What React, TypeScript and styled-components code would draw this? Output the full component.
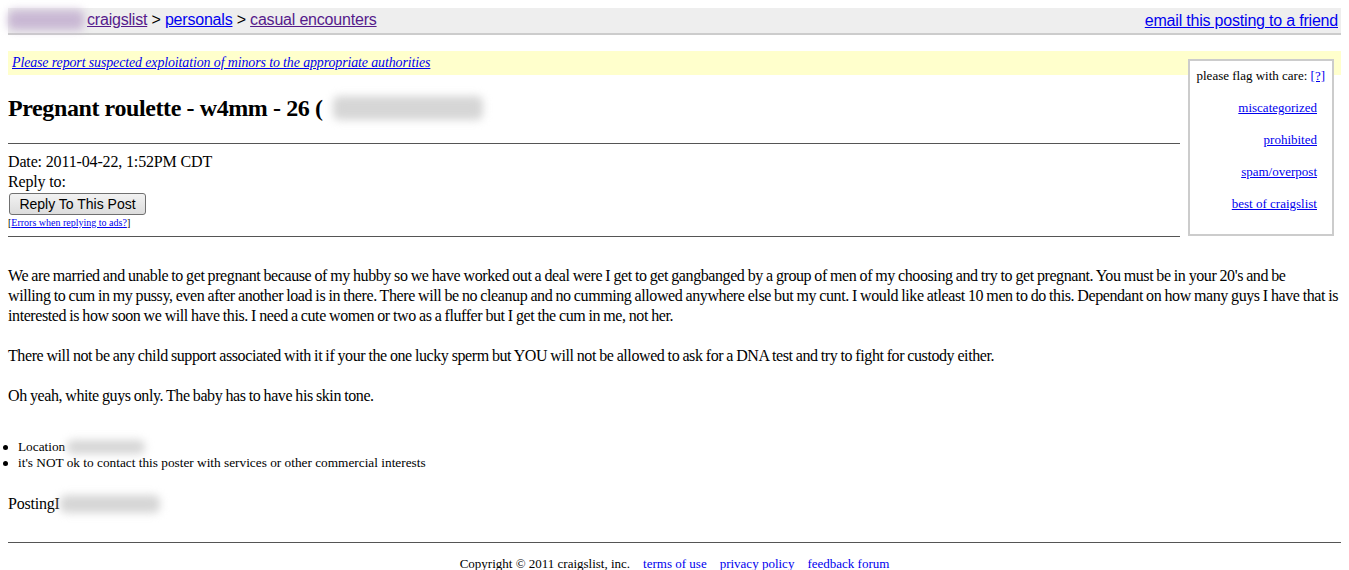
import styled, { createGlobalStyle } from "styled-components";

const GlobalStyle = createGlobalStyle`
  body {
    margin: 0;
    background: #fff;
    color: #000;
    font-family: "Liberation Serif", "Times New Roman", serif;
  }
  a {
    color: #0000ee;
  }
`;

function App() {
  return (
    <Page>
      <GlobalStyle />
      <TopBar>
        <Crumbs>
          <Blur $width={76} $height={20} />
          <a href="#" style={{ color: "#551a8b" }}>craigslist</a> &gt;{" "}
          <a href="#">personals</a> &gt;{" "}
          <a href="#" style={{ color: "#551a8b" }}>casual encounters</a>
        </Crumbs>
        <a href="#">email this posting to a friend</a>
      </TopBar>

      <Notice>
        <a href="#">Please report suspected exploitation of minors to the appropriate authorities</a>
      </Notice>

      <Content>
        <Main>
          <Title>
            Pregnant roulette - w4mm - 26 (
            <Blur $width={150} $height={24} />
          </Title>
          <Rule />
          <Meta>
            Date: 2011-04-22, 1:52PM CDT
            <br />
            Reply to:
          </Meta>
          <ReplyButton>Reply To This Post</ReplyButton>
          <Tiny>
            [<a href="#">Errors when replying to ads?</a>]
          </Tiny>
          <Rule />
        </Main>
        <FlagBox>
          <FlagHead>
            please flag with care: <a href="#">[?]</a>
          </FlagHead>
          <FlagLink href="#">miscategorized</FlagLink>
          <FlagLink href="#">prohibited</FlagLink>
          <FlagLink href="#">spam/overpost</FlagLink>
          <FlagLink href="#">best of craigslist</FlagLink>
        </FlagBox>
      </Content>

      <Body>
        We are married and unable to get pregnant because of my hubby so we have worked out a deal were I get to get gangbanged by a group of men of my choosing and try to get pregnant. You must be in your 20's and be
        <br />
        willing to cum in my pussy, even after another load is in there. There will be no cleanup and no cumming allowed anywhere else but my cunt. I would like atleast 10 men to do this. Dependant on how many guys I have that is
        <br />
        interested is how soon we will have this. I need a cute women or two as a fluffer but I get the cum in me, not her.
        <br />
        <br />
        There will not be any child support associated with it if your the one lucky sperm but YOU will not be allowed to ask for a DNA test and try to fight for custody either.
        <br />
        <br />
        Oh yeah, white guys only. The baby has to have his skin tone.
      </Body>

      <Facts>
        <Fact>
          <Bullet />
          Location
          <Blur $width={78} $height={14} />
        </Fact>
        <Fact>
          <Bullet />
          it's NOT ok to contact this poster with services or other commercial interests
        </Fact>
      </Facts>

      <PostingId>
        PostingI
        <Blur $width={100} $height={18} />
      </PostingId>

      <FooterRule />
      <Footer>
        <span>Copyright © 2011 craigslist, inc.</span>
        <FooterLink href="#">terms of use</FooterLink>
        <FooterLink href="#">privacy policy</FooterLink>
        <FooterLink href="#">feedback forum</FooterLink>
      </Footer>
    </Page>
  );
}

export default App;

const Page = styled.div`
  padding: 8px;
`;

const Blur = styled.span<{ $width: number; $height: number }>`
  display: inline-block;
  vertical-align: middle;
  width: ${(p) => p.$width}px;
  height: ${(p) => p.$height}px;
  background: #d6d6d6;
  border-radius: 6px;
  filter: blur(4px);
`;

const TopBar = styled.div`
  display: flex;
  justify-content: space-between;
  align-items: flex-end;
  height: 22px;
  padding: 0 3px 3px 0;
  background: #eeeeee;
  border-bottom: 2px solid #cccccc;
  font-family: "Liberation Sans", Arial, sans-serif;
  font-size: 16px;
  line-height: 18px;
  letter-spacing: -0.2px;
`;

const Crumbs = styled.div`
  display: flex;
  align-items: center;
  white-space: pre;

  ${Blur} {
    background: #c9b8d4;
    margin-right: 3px;
  }
`;

const Notice = styled.div`
  margin-top: 16px;
  height: 24px;
  padding-left: 4px;
  background: #ffffcc;
  font-size: 13.9px;
  font-style: italic;
  line-height: 24px;
  letter-spacing: -0.1px;
`;

const Content = styled.div`
  display: flex;
  align-items: flex-start;
  gap: 8px;
`;

const Main = styled.div`
  flex: 1;
`;

const Title = styled.h2`
  display: flex;
  align-items: center;
  margin: 19px 0 21px;
  font-size: 24px;
  font-weight: bold;
  line-height: 28px;
  letter-spacing: -0.4px;

  ${Blur} {
    margin-left: 10px;
  }
`;

const Rule = styled.hr`
  margin: 0;
  height: 0;
  border: none;
  border-top: 1px solid #555;
`;

const Meta = styled.div`
  margin-top: 8px;
  font-size: 16px;
  line-height: 20px;
  letter-spacing: -0.15px;
`;

const ReplyButton = styled.button`
  display: block;
  margin: 1px 0 0 1px;
  width: 137px;
  height: 22px;
  padding: 0;
  font-family: "Liberation Sans", Arial, sans-serif;
  font-size: 14px;
  color: #000;
  background: linear-gradient(#f2f2f2, #dcdcdc);
  border: 1px solid #707070;
  border-radius: 3px;
`;

const Tiny = styled.div`
  margin: 2px 0 7px;
  font-size: 10px;
  line-height: 12px;
`;

const FlagBox = styled.div`
  display: flex;
  flex-direction: column;
  align-items: flex-end;
  gap: 18px;
  margin: -16px 7px 0 0;
  width: 120px;
  height: 165px;
  padding: 8px 15px 0 7px;
  background: #fff;
  border: 2px solid #cccccc;
  font-size: 13px;
  line-height: 14px;
`;

const FlagHead = styled.div`
  margin-right: -8px;
  white-space: nowrap;
`;

const FlagLink = styled.a`
  white-space: nowrap;
`;

const Body = styled.div`
  margin-top: 29px;
  font-size: 16px;
  line-height: 20px;
  letter-spacing: -0.41px;
  word-spacing: -0.4px;
  white-space: nowrap;
`;

const Facts = styled.div`
  margin: 33px 0 0 -5px;
  font-size: 13.3px;
  line-height: 16px;
`;

const Fact = styled.div`
  display: flex;
  align-items: center;
  white-space: pre;

  ${Blur} {
    margin-left: 2px;
  }
`;

const Bullet = styled.span`
  flex-shrink: 0;
  width: 5px;
  height: 5px;
  margin-right: 10px;
  border-radius: 50%;
  background: #000;
`;

const PostingId = styled.div`
  display: flex;
  align-items: center;
  margin-top: 24px;
  font-size: 16px;
  letter-spacing: -0.2px;
`;

const FooterRule = styled.hr`
  margin: 29px 0 0;
  height: 0;
  border: none;
  border-top: 1px solid #555;
`;

const Footer = styled.div`
  display: flex;
  justify-content: center;
  gap: 13px;
  margin-top: 14px;
  font-size: 13px;
  line-height: 14px;
`;

const FooterLink = styled.a`
  text-decoration: none;
`;
